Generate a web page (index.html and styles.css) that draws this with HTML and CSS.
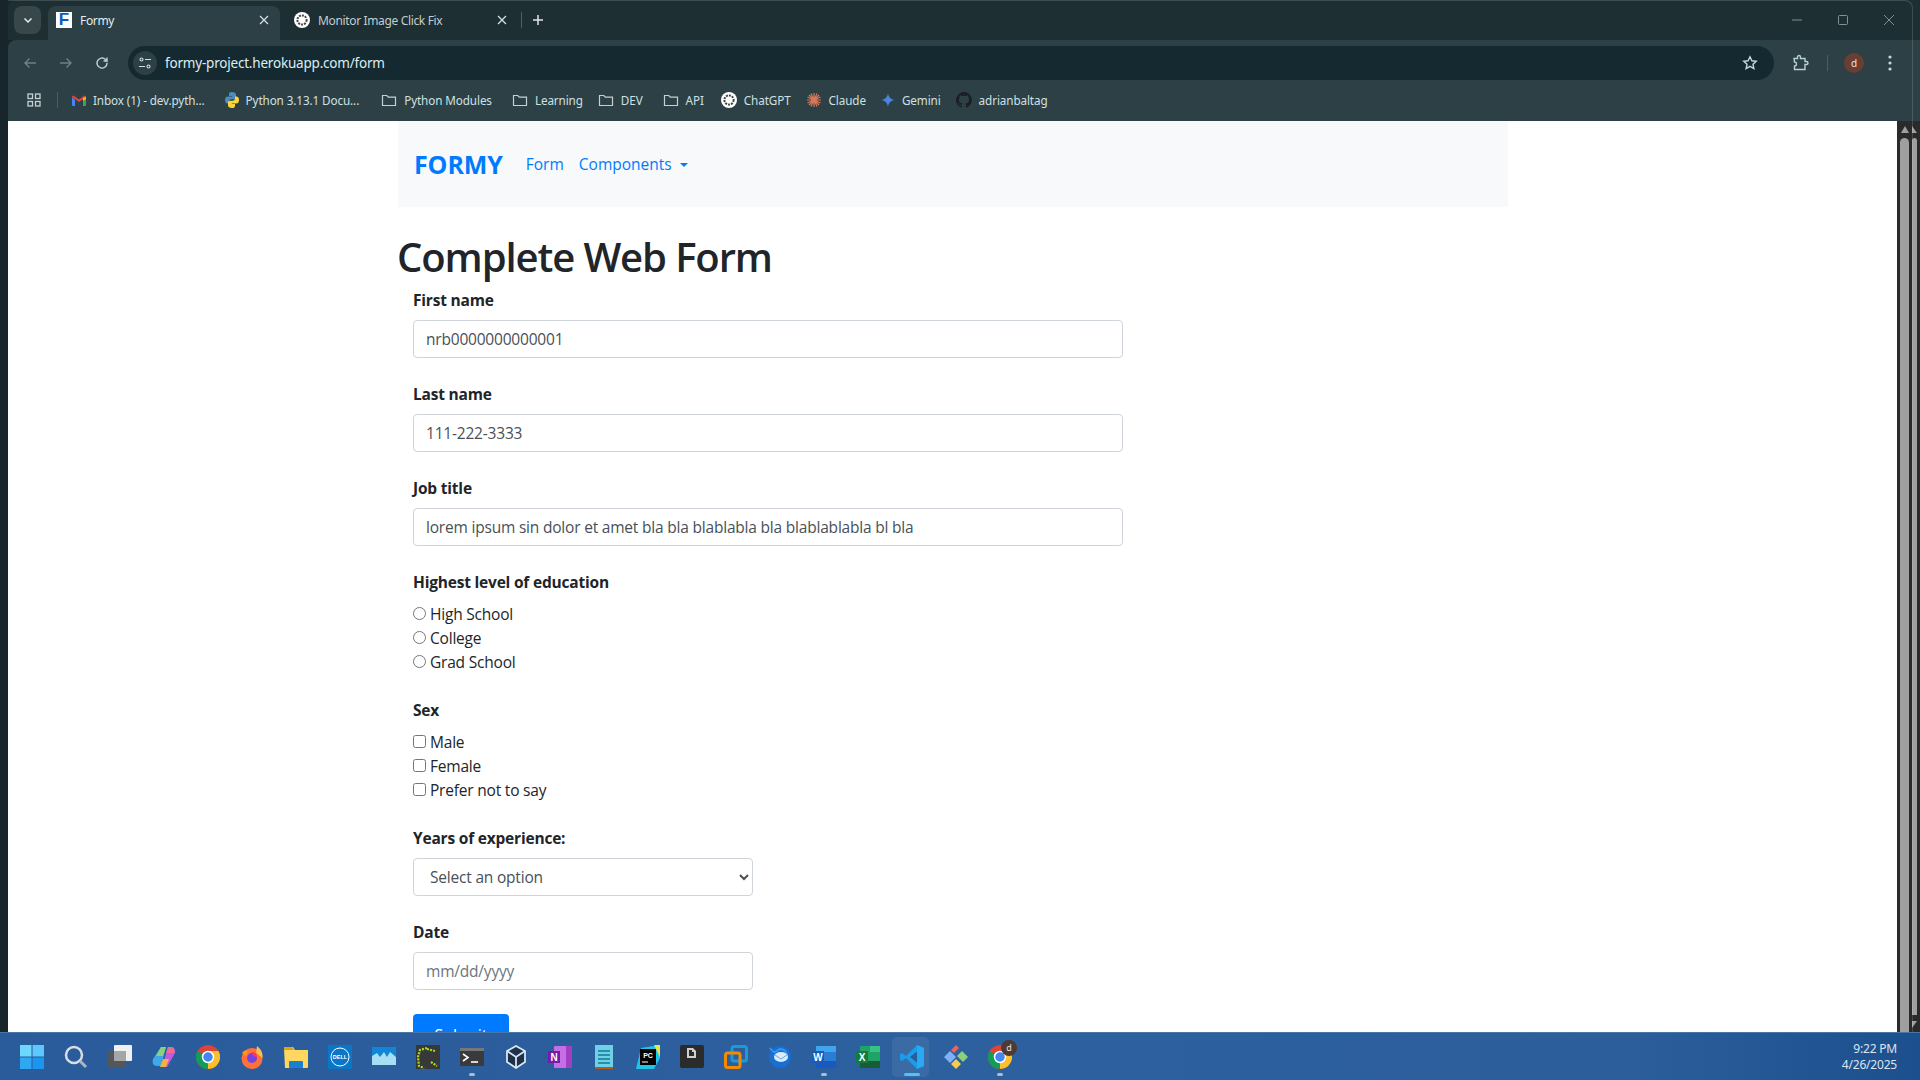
FILE: index.html
```html
<!DOCTYPE html><html lang="en">
<head>
    <meta charset="UTF-8" />
    <title>Formy</title>
    <link rel="stylesheet" href="styles.css">
</head>
<body>

<div class="tabstrip">
    <div class="tab-search"><svg width="12" height="12" viewBox="0 0 12 12"><path d="M2.500 4.500 6 8l3.500-3.500" fill="none" stroke="#e8eaed" stroke-width="1.500"/></svg></div>
    <div class="tab active">
        <span class="fav-f">F</span>
        <span class="tab-title">Formy</span>
        <svg class="tab-x" width="10" height="10" viewBox="0 0 10 10"><path d="M1 1l8 8M9 1l-8 8" stroke="#d5dfe2" stroke-width="1.300"/></svg>
    </div>
    <div class="tab second">
        <svg width="16" height="16" viewBox="0 0 16 16"><circle cx="8" cy="8" r="8" fill="#fff"/><circle cx="8" cy="8" r="4.600" fill="none" stroke="#444" stroke-width="2" stroke-dasharray="2 1"/></svg>
        <span class="tab-title dim">Monitor Image Click Fix</span>
        <svg class="tab-x" width="10" height="10" viewBox="0 0 10 10"><path d="M1 1l8 8M9 1l-8 8" stroke="#d5dfe2" stroke-width="1.300"/></svg>
    </div>
    <div class="tab-sep"></div>
    <svg class="new-tab" width="12" height="12" viewBox="0 0 12 12"><path d="M6 1v10M1 6h10" stroke="#dfe5e7" stroke-width="1.500"/></svg>
    <div class="win-btns">
        <svg width="12" height="12" viewBox="0 0 12 12"><path d="M1 6h10" stroke="#83908f"/></svg>
        <svg width="12" height="12" viewBox="0 0 12 12"><rect x="1.500" y="1.500" width="9" height="9" rx="1" fill="none" stroke="#83908f"/></svg>
        <svg width="12" height="12" viewBox="0 0 12 12"><path d="M1 1l10 10M11 1L1 11" stroke="#83908f"/></svg>
    </div>
</div>

<div class="toolbar">
    <svg width="16" height="16" viewBox="0 0 16 16"><path d="M14 8H3M7.500 3.500 3 8l4.500 4.500" fill="none" stroke="#6f8084" stroke-width="1.400"/></svg>
    <svg class="nav-fwd" width="16" height="16" viewBox="0 0 16 16"><path d="M2 8h11M8.500 3.500 13 8l-4.500 4.500" fill="none" stroke="#6f8084" stroke-width="1.400"/></svg>
    <svg class="nav-fwd" width="16" height="16" viewBox="0 0 16 16"><path d="M13 8a5 5 0 1 1-1.500-3.500L13 6V2.500M13 6H9.500" fill="none" stroke="#c5d0d3" stroke-width="1.400"/></svg>
    <div class="omnibox">
        <span class="site-icon"><svg width="14" height="14" viewBox="0 0 14 14"><g fill="none" stroke="#d3dee1" stroke-width="1.100"><circle cx="3.500" cy="3.500" r="1.500"/><path d="M7 3.500h6M1 10.500h6"/><circle cx="10.500" cy="10.500" r="1.500"/></g></svg></span>
        <span class="url">formy-project.herokuapp.com/form</span>
        <svg width="16" height="16" viewBox="0 0 16 16"><path d="M8 1.800l1.900 4 4.300.5-3.200 3 .9 4.300L8 11.400l-3.900 2.200.9-4.300-3.200-3 4.300-.5z" fill="none" stroke="#c5d9dd" stroke-width="1.400"/></svg>
    </div>
    <svg width="18" height="18" viewBox="0 0 18 18"><path d="M3 4.500h3.500V3a1.500 1.500 0 0 1 3 0v1.500H14v3h1.500a1.500 1.500 0 0 1 0 3H14V15.500H3.500V12a2 2 0 0 0 0-4z" fill="none" stroke="#b7d0d6" stroke-width="1.400"/></svg>
    <div class="tool-sep"></div>
    <span class="avatar">d</span>
    <svg class="kebab" width="4" height="16" viewBox="0 0 4 16"><g fill="#c5d9dd"><circle cx="2" cy="2" r="1.600"/><circle cx="2" cy="8" r="1.600"/><circle cx="2" cy="14" r="1.600"/></g></svg>
</div>

<div class="bookmarks">
    <svg class="apps" width="14" height="14" viewBox="0 0 14 14"><g fill="none" stroke="#c5d0d3" stroke-width="1.300"><rect x="1" y="1" width="4.500" height="4.500"/><rect x="8.500" y="1" width="4.500" height="4.500"/><rect x="1" y="8.500" width="4.500" height="4.500"/><rect x="8.500" y="8.500" width="4.500" height="4.500"/></g></svg>
    <div class="bm-sep"></div>
    <div class="bm"><svg width="14" height="11" viewBox="0 0 14 11"><path d="M0 2v8a1 1 0 0 0 1 1h2V5z" fill="#4285f4"/><path d="M14 2v8a1 1 0 0 1-1 1h-2V5z" fill="#34a853"/><path d="M0 2l7 5 7-5V1.500L12.500.500 7 4.500 1.500.500 0 1.500z" fill="#ea4335"/><path d="M11 3v3l3-2V2z" fill="#fbbc04"/></svg>Inbox (1) - dev.pyth...</div>
    <div class="bm wide"><svg width="14" height="16" viewBox="0 0 14 16"><path d="M7 0C4 0 4 1.300 4 2.500V4h3.200v.6H2.500C1 4.600 0 5.800 0 8s1 3.400 2.500 3.400H4V9.500C4 8.200 5 7.300 6.200 7.300h3c1 0 1.800-.8 1.800-1.800V2.500C11 1 9.500 0 7 0z" fill="#4b8bbe"/><path d="M7 16c3 0 3-1.300 3-2.500V12H6.800v-.6h4.700c1.500 0 2.500-1.200 2.500-3.400s-1-3.400-2.500-3.400H10v1.900c0 1.300-1 2.200-2.200 2.200h-3c-1 0-1.800.8-1.800 1.800v3C3 15 4.500 16 7 16z" fill="#ffd43b"/></svg>Python 3.13.1 Docu...</div>
    <div class="bm"><svg width="16" height="14" viewBox="0 0 16 14"><path d="M1.500 2.500h4.300l1.500 1.700h7.200v8.300h-13z" fill="none" stroke="#c5d0d3" stroke-width="1.200"/></svg>Python Modules</div>
    <div class="bm tight"><svg width="16" height="14" viewBox="0 0 16 14"><path d="M1.500 2.500h4.300l1.500 1.700h7.200v8.300h-13z" fill="none" stroke="#c5d0d3" stroke-width="1.200"/></svg>Learning</div>
    <div class="bm"><svg width="16" height="14" viewBox="0 0 16 14"><path d="M1.500 2.500h4.300l1.500 1.700h7.200v8.300h-13z" fill="none" stroke="#c5d0d3" stroke-width="1.200"/></svg>DEV</div>
    <div class="bm mid"><svg width="16" height="14" viewBox="0 0 16 14"><path d="M1.500 2.500h4.300l1.500 1.700h7.200v8.300h-13z" fill="none" stroke="#c5d0d3" stroke-width="1.200"/></svg>API</div>
    <div class="bm tight"><svg width="16" height="16" viewBox="0 0 16 16"><circle cx="8" cy="8" r="8" fill="#fff"/><circle cx="8" cy="8" r="4.600" fill="none" stroke="#444" stroke-width="2" stroke-dasharray="2 1"/></svg>ChatGPT</div>
    <div class="bm tight"><svg width="16" height="16" viewBox="0 0 16 16"><g stroke="#d97757" stroke-width="1.200"><path d="M8 1v14M1 8h14M3 3l10 10M13 3L3 13M5 1.500l6 13M11 1.500l-6 13M1.500 5l13 6M14.500 5l-13 6"/></g></svg>Claude</div>
    <div class="bm tight"><svg width="14" height="16" viewBox="0 0 14 16"><path d="M7 1c.6 4 2.500 6.200 7 7-4.500.8-6.400 3-7 7-.6-4-2.500-6.200-7-7 4.500-.8 6.400-3 7-7z" fill="#4a86e0"/></svg>Gemini</div>
    <div class="bm"><svg width="16" height="16" viewBox="0 0 16 16"><path fill="#1b1f23" d="M8 0a8 8 0 0 0-2.500 15.600c.4.100.5-.2.500-.4v-1.400c-2.200.5-2.700-1-2.700-1-.4-.9-.9-1.200-.9-1.200-.7-.5.100-.5.100-.5.800.100 1.200.8 1.200.8.700 1.200 1.900.9 2.300.7.100-.5.300-.9.500-1.100-1.800-.2-3.600-.9-3.600-4 0-.9.300-1.600.8-2.100-.1-.2-.4-1 .1-2.100 0 0 .7-.2 2.200.8a7.600 7.600 0 0 1 4 0c1.500-1 2.200-.8 2.200-.8.400 1.100.200 1.900.100 2.100.5.600.8 1.300.8 2.100 0 3.100-1.900 3.700-3.700 3.900.3.300.6.800.6 1.500v2.200c0 .2.100.5.600.4A8 8 0 0 0 8 0z"/></svg>adrianbaltag</div>
</div>

<div class="viewport">
    <div class="edge"></div>
    <div class="page">
        <div class="container">
            <nav class="navbar">
                <a class="brand">FORMY</a>
                <a class="nav-link">Form</a>
                <a class="nav-link">Components<span class="caret"></span></a>
            </nav>
            <h1>Complete Web Form</h1>
            <form class="form">
                <div class="group">
                    <label class="lbl">First name</label>
                    <input class="control" type="text" value="nrb0000000000001">
                </div>
                <div class="group">
                    <label class="lbl">Last name</label>
                    <input class="control" type="text" value="111-222-3333">
                </div>
                <div class="group">
                    <label class="lbl">Job title</label>
                    <input class="control" type="text" value="lorem ipsum sin dolor et amet bla bla blablabla bla blablablabla bl bla">
                </div>
                <div class="group">
                    <label class="lbl">Highest level of education</label>
                    <div class="check"><input type="radio" name="edu"><span>High School</span></div>
                    <div class="check"><input type="radio" name="edu"><span>College</span></div>
                    <div class="check"><input type="radio" name="edu"><span>Grad School</span></div>
                </div>
                <div class="group">
                    <label class="lbl">Sex</label>
                    <div class="check"><input type="checkbox"><span>Male</span></div>
                    <div class="check"><input type="checkbox"><span>Female</span></div>
                    <div class="check"><input type="checkbox"><span>Prefer not to say</span></div>
                </div>
                <div class="group">
                    <label class="lbl">Years of experience:</label>
                    <select class="control short"><option>Select an option</option></select>
                </div>
                <div class="group">
                    <label class="lbl">Date</label>
                    <input class="control short" type="text" placeholder="mm/dd/yyyy">
                </div>
                <a class="btn">Submit</a>
            </form>
        </div>
    </div>
    <div class="scrollbar">
        <div class="sb-col wide">
            <span class="arrow up"></span>
            <span class="thumb"></span>
        </div>
        <div class="sb-col thin">
            <span class="arrow up-half"></span>
            <span class="thumb"></span>
            <span class="arrow down-half"></span>
        </div>
    </div>
</div>

<div class="taskbar">
    <div class="task-icons">
        <span class="ti"><svg width="24" height="24" viewBox="0 0 24 24"><rect width="11.500" height="11.500" fill="#6fd7fb"/><rect x="12.500" width="11.500" height="11.500" fill="#5cc8fb"/><rect y="12.500" width="11.500" height="11.500" fill="#2fa8f3"/><rect x="12.500" y="12.500" width="11.500" height="11.500" fill="#1b96ee"/></svg></span>
        <span class="ti"><svg width="24" height="24" viewBox="0 0 24 24"><circle cx="10" cy="10" r="8" fill="none" stroke="#d7dde4" stroke-width="2.500"/><path d="M16 16l6 6" stroke="#aab6c4" stroke-width="3"/></svg></span>
        <span class="ti"><svg width="24" height="24" viewBox="0 0 24 24"><rect y="6" width="18" height="16" rx="1" fill="#55565a"/><rect x="6" width="18" height="16" rx="1" fill="#f0f0f2"/><rect x="6" y="6" width="12" height="10" fill="#a5a6a8"/></svg></span>
        <span class="ti"><svg width="24" height="24" viewBox="0 0 24 24"><path d="M9 2h5L9 21H5C1 21 0 18 1 14z" fill="#3da9e8"/><path d="M9 2h5l-3 9H4z" fill="#8bd17c"/><path d="M10 22h5l8-14c1-4-2-6-4-6h-3z" fill="#c45ae0"/><path d="M16 2h3c3 0 4 3 3 6h-8z" fill="#e9708c"/><path d="M8 22h6l3-8h-6z" fill="#f2b23d"/></svg></span>
        <span class="ti"><svg width="24" height="24" viewBox="0 0 24 24"><circle cx="12" cy="12" r="12" fill="#db4437"/><path d="M12 12 1.600 6a12 12 0 0 0 10.400 18z" fill="#0f9d58"/><path d="M12 6h10.400a12 12 0 0 1-10.400 18z" fill="#fbc02d"/><circle cx="12" cy="12" r="5.500" fill="#4285f4" stroke="#fff" stroke-width="1.500"/></svg></span>
        <span class="ti"><svg width="24" height="24" viewBox="0 0 24 24"><circle cx="12" cy="13.500" r="10.500" fill="#ff7139"/><path d="M17 1c4 3 6 7 5.500 12L16 8z" fill="#ffbd4f"/><path d="M2 8c2-3 4-3 6-2l-2 5z" fill="#ff980e"/><circle cx="12" cy="13" r="5" fill="#7543e3"/><path d="M12 7c3 0 5 2 5 5l-4-1z" fill="#ff3750"/></svg></span>
        <span class="ti"><svg width="24" height="24" viewBox="0 0 24 24"><path d="M0 3a1 1 0 0 1 1-1h8l2 3h13v17a1 1 0 0 1-1 1H1z" fill="#ffd75e"/><path d="M0 3a1 1 0 0 1 1-1h7l2 3H0z" fill="#d9a514"/><rect x="5" y="16" width="14" height="7" rx="1" fill="#1a7fd1"/></svg></span>
        <span class="ti"><svg width="24" height="24" viewBox="0 0 24 24"><rect width="24" height="24" fill="#0a76c8"/><circle cx="12" cy="12" r="9" fill="none" stroke="#fff"/><text x="12" y="14" class="dell">DELL</text></svg></span>
        <span class="ti"><svg width="24" height="20" viewBox="0 0 24 20"><rect width="24" height="18" fill="#0f86d6"/><path d="M0 18V9l5-3 3 4 4-5 3 5 3-5 6 5v8z" fill="#a8def5"/></svg></span>
        <span class="ti"><svg width="24" height="24" viewBox="0 0 24 24"><rect width="24" height="24" fill="#38383a"/><path d="M11 3 4 5 2 12l1 9 5 2M11 4l8 2M15 17l6 4" fill="none" stroke="#a4e21a" stroke-width="2.200" stroke-dasharray="2 1.200"/></svg></span>
        <span class="ti"><svg width="24" height="18" viewBox="0 0 24 18"><rect width="24" height="18" rx="1" fill="#3a3a3c"/><rect width="24" height="3" fill="#76777a"/><path d="M3 6l5 3.500L3 13" fill="none" stroke="#fff" stroke-width="1.600"/><path d="M11 14h7" stroke="#fff" stroke-width="1.600"/></svg><i class="run-dot"></i></span>
        <span class="ti"><svg width="20" height="24" viewBox="0 0 20 24"><path d="M10 1l9 5v11l-9 6-9-6V6z" fill="#1d3148" stroke="#d7e6f3" stroke-width="1.800"/><path d="M1 6l9 6 9-6M10 12v11" fill="none" stroke="#d7e6f3" stroke-width="1.800"/></svg></span>
        <span class="ti"><svg width="24" height="22" viewBox="0 0 24 22"><rect x="6" width="18" height="22" rx="1" fill="#c56ee6"/><path d="M18 0h6v22h-6z" fill="#a03fc2"/><rect y="5" width="12" height="12" fill="#7719aa"/><text x="6" y="14.500" class="tile-letter">N</text></svg></span>
        <span class="ti"><svg width="18" height="24" viewBox="0 0 18 24"><rect width="18" height="22" fill="#6fd0e6"/><rect y="22" width="18" height="2" fill="#b4591a"/><path d="M3 6h12M3 10h12M3 14h12M3 18h12" stroke="#0f7b97" stroke-width="1.600"/></svg></span>
        <span class="ti"><svg width="24" height="24" viewBox="0 0 24 24"><path d="M5 3 24 0v13l-6 11H0z" fill="#20c4e8"/><path d="M18 0h6v12z" fill="#e6e84a"/><rect x="4" y="4" width="16" height="16" fill="#000"/><text x="12" y="13" class="pc-letter">PC</text><path d="M6 17h6" stroke="#fff"/></svg></span>
        <span class="ti"><svg width="24" height="24" viewBox="0 0 24 24"><rect width="24" height="23" rx="2" fill="#2b2b2b"/><path d="M7 3h6l3 3v7H7z" fill="#cfcfcf"/><path d="M9 5h3v2h2v4H9z" fill="#2b2b2b"/></svg></span>
        <span class="ti"><svg width="24" height="24" viewBox="0 0 24 24"><rect x="8" y="1.500" width="14.500" height="14.500" rx="2" fill="none" stroke="#1d9ad6" stroke-width="3"/><rect x="1.500" y="8" width="14.500" height="14.500" rx="2" fill="none" stroke="#f38b00" stroke-width="3"/></svg></span>
        <span class="ti"><svg width="24" height="24" viewBox="0 0 24 24"><circle cx="12" cy="12" r="11" fill="#1a6ed1"/><path d="M2 3c2 3 4 4 5 4l5-3c5 0 7 4 7 8" fill="none" stroke="#3594ee" stroke-width="2"/><ellipse cx="13" cy="12" rx="7" ry="5" fill="#d5ecfb"/><path d="M7 10l6 4 6-4" fill="none" stroke="#6aa9e4"/></svg></span>
        <span class="ti"><svg width="24" height="22" viewBox="0 0 24 22"><rect x="4" width="20" height="22" rx="1" fill="#2b7cd3"/><rect x="4" width="20" height="6" fill="#41a5ee"/><rect x="4" y="15" width="20" height="7" fill="#185abd"/><rect y="5" width="12" height="12" fill="#185abd"/><text x="6" y="14.500" class="tile-letter">W</text></svg><i class="run-dot"></i></span>
        <span class="ti"><svg width="24" height="22" viewBox="0 0 24 22"><rect x="4" width="20" height="22" rx="1" fill="#21a366"/><rect x="14" width="10" height="6" fill="#33c481"/><rect x="4" y="15" width="20" height="7" fill="#185c37"/><rect y="5" width="12" height="12" fill="#107c41"/><text x="6" y="14.500" class="tile-letter">X</text></svg></span>
        <span class="ti open"><svg width="24" height="24" viewBox="0 0 24 24"><path d="M17 0l7 3v18l-7 3L6 13l-4 3-2-1V9l2-1 4 3z" fill="#1b9ce8"/><path d="M17 6.500 10 12l7 5.500z" fill="#2b5c99"/><path d="M17 0l7 3v18l-7 3z" fill="#27aaf2"/></svg><i class="run-bar"></i></span>
        <span class="ti"><svg width="24" height="24" viewBox="0 0 24 24"><path d="M12 12 6 6 0 12l6 6z" fill="#7fb0f5"/><path d="M12 0 7 5l3 3 5-5z" fill="#ef5f5f"/><path d="M18 6l-5 5 6 6 5-5z" fill="#8ed07a"/><path d="M7 19l5 5 5-5-5-5z" fill="#f7cb4d"/></svg></span>
        <span class="ti"><svg width="24" height="24" viewBox="0 0 24 24"><circle cx="12" cy="12" r="12" fill="#db4437"/><path d="M12 12 1.600 6a12 12 0 0 0 10.400 18z" fill="#0f9d58"/><path d="M12 6h10.400a12 12 0 0 1-10.400 18z" fill="#fbc02d"/><circle cx="12" cy="12" r="5.500" fill="#4285f4" stroke="#fff" stroke-width="1.500"/></svg><b class="chrome-badge">d</b><i class="run-dot"></i></span>
    </div>
    <div class="clock"><div>9:22 PM</div><div>4/26/2025</div></div>
</div>

<div class="win-outline"></div>

</body>
</html>
```

FILE: styles.css
```css
*{ box-sizing:border-box; }
html, body{ height:100%; }
body{ margin:0; display:flex; flex-direction:column; height:1080px; overflow:hidden; background:#18262b; font-family:"Open Sans", sans-serif; }

/* browser chrome */
.tabstrip{ height:40px; margin-left:8px; background:#1e2f33; display:flex; align-items:flex-end; padding-left:6px; flex:none; border-radius:8px 0 0 0; }
.tab-search{ width:27px; height:28px; margin-bottom:6px; margin-right:7px; border-radius:8px; background:#38474a; display:flex; align-items:center; justify-content:center; }
.tab{ height:34px; padding:0 11px 6px 8px; display:flex; align-items:center; gap:8px; font-size:12px; border-radius:8px 8px 0 0; color:#e3edf0; }
.tab.active{ width:232px; background:#2c4045; }
.tab.second{ width:238px; padding-left:14px; }
.tab-title{ flex:1; font-family:"Noto Sans", sans-serif; letter-spacing:-.35px; }
.tab-title.dim{ color:#c3cdd0; }
.fav-f{ width:16px; height:16px; background:#fff; color:#0a60b8; font:bold 17px/16px "Liberation Sans", sans-serif; text-align:center; }
.tab-x{ flex:none; }
.tab-sep{ width:1px; height:16px; background:#50605f; margin:0 0 12px 3px; }
.new-tab{ margin:0 0 14px 10px; }
.win-btns{ margin-left:auto; margin-bottom:14px; display:flex; gap:34px; padding-right:25px; }

.toolbar{ height:46px; margin-left:8px; background:#2c4045; display:flex; align-items:center; padding:0 28px 0 14px; flex:none; border-radius:8px 0 0 0; }
.nav-fwd{ margin-left:20px; }
.omnibox{ flex:1; height:34px; margin:0 17px 0 18px; background:#142a30; border-radius:17px; display:flex; align-items:center; padding-right:16px; }
.site-icon{ width:24px; height:24px; margin-left:5px; border-radius:50%; background:#2c4045; display:flex; align-items:center; justify-content:center; }
.url{ flex:1; margin-left:8px; font:13.500px "Noto Sans", sans-serif; color:#dceef3; letter-spacing:-.2px; }
.tool-sep{ width:1px; height:16px; background:#4a5d60; margin:0 16px 0 18px; }
.avatar{ width:20px; height:20px; border-radius:50%; background:#6b3e33; color:#f0e3df; font:10px/20px "Noto Sans", sans-serif; text-align:center; }
.kebab{ margin-left:24px; }

.bookmarks{ height:35px; margin-left:8px; background:#2c4045; display:flex; align-items:center; padding:0 0 7px 19px; flex:none; font:11.700px "Noto Sans", sans-serif; color:#cfe0e4; letter-spacing:-.1px; }
.apps{ flex:none; }
.bm-sep{ width:1px; height:16px; background:#4a5d60; margin:0 14px 0 16px; }
.bm{ display:flex; align-items:center; gap:7px; margin-right:20px; white-space:nowrap; }
.bm.wide{ margin-right:22px; }
.bm.mid{ margin-right:17px; }
.bm.tight{ margin-right:15px; }

/* page */
.viewport{ flex:1; display:flex; min-height:0; }
.edge{ width:8px; background:#18262b; flex:none; }
.page{ flex:1; background:#fff; overflow:hidden; }
.container{ width:1110px; margin-left:390px; color:#212529; }
.navbar{ height:86px; background:#f8f9fa; display:flex; align-items:center; padding:0 16px; gap:15px; }
.brand{ font-size:25px; font-weight:700; color:#007bff; letter-spacing:-.1px; margin-right:8px; }
.nav-link{ font-size:15.500px; color:#007bff; }
.caret{ display:inline-block; margin-left:8px; vertical-align:3px; border-top:4.800px solid; border-left:4.800px solid transparent; border-right:4.800px solid transparent; }
h1{ margin:26px 0 0 -1px; font-size:40px; line-height:48px; font-weight:600; letter-spacing:-1.100px; }
.form{ padding:0 15px; margin-top:7px; }
.group{ margin-bottom:24px; }
.lbl{ display:block; font-size:15.500px; font-weight:700; line-height:24px; margin-bottom:8px; letter-spacing:-.2px; }
.control{ display:block; width:710px; height:38px; padding:6px 12px; font:15.500px "Open Sans", sans-serif; color:#495057; border:1px solid #ced4da; border-radius:4px; background:#fff; letter-spacing:-.2px; }
.control.short{ width:340px; }
.control::placeholder{ color:#6c757d; opacity:1; }
.check{ display:flex; align-items:center; height:24px; font-size:15.500px; letter-spacing:-.2px; }
.check input{ width:13px; height:13px; margin:0 4px 2px 0; }
.btn{ display:block; width:96px; height:38px; background:#007bff; border-radius:4px; color:#fff; text-align:center; font-size:16px; line-height:42px; }

.scrollbar{ width:23px; flex:none; background:#2a2a2a; display:flex; gap:3px; padding:5px 0 0 3px; }
.sb-col{ display:flex; flex-direction:column; align-items:center; }
.sb-col.wide{ width:9px; }
.sb-col.thin{ width:5px; }
.thumb{ width:100%; flex:1; background:#9f9f9f; border-radius:5px 5px 0 0; margin-top:5px; }
.thin .thumb{ margin-bottom:6px; border-radius:3px 3px 0 0; }
.arrow{ width:0; height:0; flex:none; }
.arrow.up{ border-left:4.500px solid transparent; border-right:4.500px solid transparent; border-bottom:7px solid #9f9f9f; }
.arrow.up-half{ border-right:5px solid transparent; border-bottom:7px solid #9f9f9f; }
.arrow.down-half{ border-right:5px solid transparent; border-top:7px solid #9f9f9f; margin-bottom:4px; }

/* windows taskbar */
.taskbar{ height:48px; background:linear-gradient(90deg, #2a5b9b, #2d609f 50%, #2c5e9c 85%, #1c4f8d); border-top:1px solid #4a75a8; display:flex; align-items:center; flex:none; }
.task-icons{ display:flex; padding-left:16px; gap:12px; }
.ti{ position:relative; width:32px; height:32px; display:flex; align-items:center; justify-content:center; flex:none; }
.ti.open::before{ content:""; position:absolute; left:-4px; right:-1px; top:-4px; bottom:-4px; background:rgba(255,255,255,.07); border-radius:5px; }
.ti svg{ position:relative; }
.run-dot{ position:absolute; left:13px; bottom:-3px; width:6px; height:3px; border-radius:2px; background:#a9bdd6; }
.run-bar{ position:absolute; left:8px; bottom:-3px; width:16px; height:3px; border-radius:2px; background:#4fc3f7; }
.chrome-badge{ position:absolute; right:-1px; top:-1px; width:16px; height:16px; border-radius:50%; background:#4e3a33; color:#e9e2df; font:9px/16px "Noto Sans", sans-serif; text-align:center; }
.dell{ font:bold 5.500px "Liberation Sans", sans-serif; fill:#fff; text-anchor:middle; }
.tile-letter{ font:bold 10px "Liberation Sans", sans-serif; fill:#fff; text-anchor:middle; }
.pc-letter{ font:bold 7px "Liberation Sans", sans-serif; fill:#fff; text-anchor:middle; }
.clock{ margin-left:auto; padding-right:23px; text-align:right; font:12px/16px "Noto Sans", sans-serif; color:#dbe5ef; letter-spacing:-.2px; }

.win-outline{ position:absolute; top:0; left:8px; right:7px; height:1032px; border-top:1px solid rgba(255,255,255,.14); border-right:1px solid rgba(255,255,255,.14); border-radius:0 8px 0 0; pointer-events:none; }
```
